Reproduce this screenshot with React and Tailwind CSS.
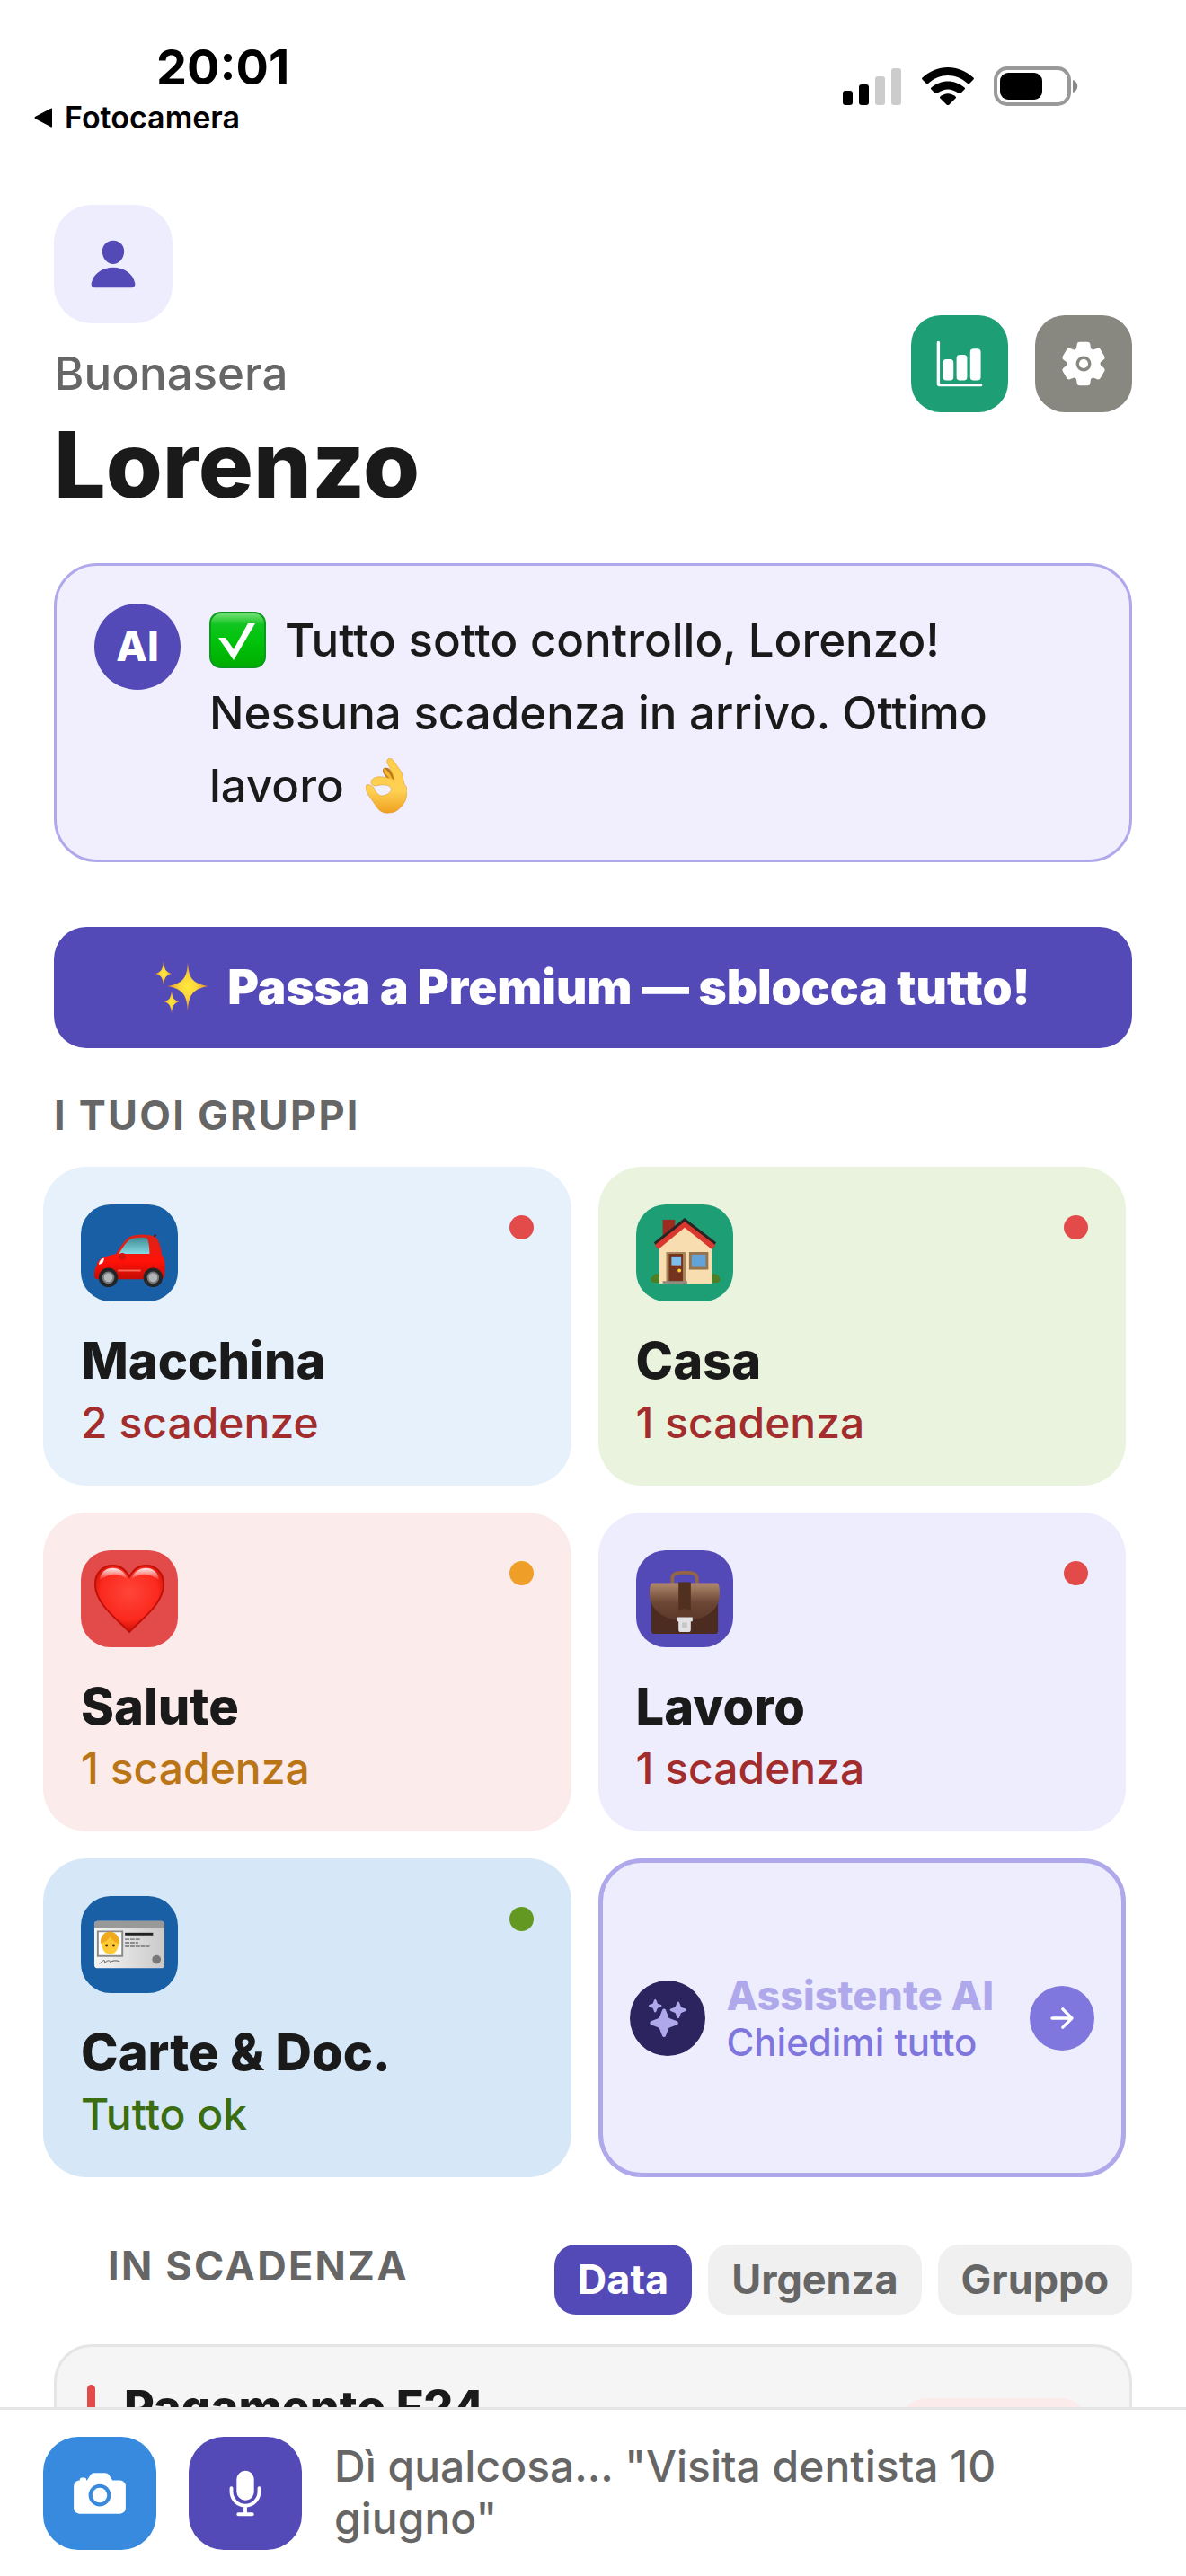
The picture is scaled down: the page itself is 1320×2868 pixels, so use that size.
import {
  IoPerson,
  IoBarChart,
  IoSettings,
  IoSparkles,
  IoArrowForward,
  IoCamera,
  IoMic,
} from "react-icons/io5";

const CheckEmoji = () => (
  <svg viewBox="0 0 64 64" className="inline-block w-16 h-16 align-[-14px] mr-5">
    <defs>
      <linearGradient id="check" x1="0" y1="0" x2="0" y2="1">
        <stop offset="0" stopColor="#7be27c" />
        <stop offset="0.22" stopColor="#10c41f" />
        <stop offset="0.5" stopColor="#00c40c" />
        <stop offset="1" stopColor="#00ac00" />
      </linearGradient>
    </defs>
    <rect x="1" y="1" width="61" height="61" rx="12" fill="url(#check)" stroke="#0a9a1c" strokeWidth="2" />
    <path d="M10 29h8l9 13 16-29h8L27 54z" fill="#fff" />
  </svg>
);

const OkHandEmoji = () => (
  <svg viewBox="0 0 46 62" className="inline-block w-[46px] h-[62px] align-[-13px] ml-6">
    <defs>
      <linearGradient id="hand" x1="0" y1="0" x2="0" y2="1">
        <stop offset="0" stopColor="#ffcf4a" />
        <stop offset="0.6" stopColor="#ffd052" />
        <stop offset="1" stopColor="#efa020" />
      </linearGradient>
    </defs>
    <path d="M21 11c3-1 5 0 7 3l7 12-8 1c-1-4-8-8-8-13 0-2 1-3 2-3z" fill="#b9791a" />
    <path
      d="M24 2c2-3 5-2 7 1l9 13c1 4 2 9 3 13 3 3 4 7 3 10-1 5-1 8-4 12-5 7-10 10-16 10-6 1-11-2-14-7L3 41c-3-5-4-9-2-11 3-1 5 0 8 3 2 4 4 8 8 9 6 0 10-3 12-7-1-3-4-5-7-5-5-1-9 1-12 1-4-1-5-4-3-7 5-5 12-3 18-2 3 0 5 2 7 2-1-3-3-8-5-13-2-4-4-6-3-9z"
      fill="url(#hand)"
      stroke="#d98d1c"
      strokeWidth="0.5"
    />
    <path d="M20 12c3 0 5 3 7 6l4 7-5-3c-3-3-6-6-6-10z" fill="#f6b52f" />
  </svg>
);

const SparklesEmoji = () => (
  <svg viewBox="0 0 60 60" className="w-15 h-15">
    <defs>
      <radialGradient id="star">
        <stop offset="0" stopColor="#ffe93b" />
        <stop offset="0.45" stopColor="#fbd43a" />
        <stop offset="1" stopColor="#e0822c" />
      </radialGradient>
    </defs>
    <g fill="url(#star)">
      <path d="M36 1c1 18 5 24 23 27-18 3-22 10-23 28-1-18-5-25-23-28C31 25 35 19 36 1z" />
      <path d="M9 0c1 9 2 12 9 14-7 2-8 5-9 13-1-8-2-11-9-13 7-2 8-5 9-14z" />
      <path d="M18 33c1 8 2 11 9 12-7 2-8 5-9 13-1-8-2-11-9-13 7-1 8-4 9-12z" />
    </g>
  </svg>
);

const CarEmoji = () => (
  <svg viewBox="0 -9 82 82" className="w-20 h-20">
    <defs>
      <linearGradient id="car" x1="0" y1="0" x2="0" y2="1">
        <stop offset="0" stopColor="#d8241b" />
        <stop offset="0.6" stopColor="#ff1208" />
        <stop offset="1" stopColor="#c40c05" />
      </linearGradient>
      <linearGradient id="glass" x1="0" y1="0" x2="0" y2="1">
        <stop offset="0" stopColor="#3e8a94" />
        <stop offset="1" stopColor="#86dbe4" />
      </linearGradient>
    </defs>
    <path d="M66 18l5-7" stroke="#5b1410" strokeWidth="2" />
    <path
      d="M1 58c0-6 1-9 3-12 0-6 6-10 22-13 6-10 12-20 20-21 9-2 20-1 25 2 4 3 6 12 7 20 4 5 4 14 3 24 0 3-2 4-6 4H5c-3 0-4-2-4-4z"
      fill="url(#car)"
    />
    <path d="M29 33c5-8 10-17 17-18 6-1 12-1 15 0 2 4 3 10 3 18z" fill="url(#glass)" />
    <circle cx="33" cy="36" r="4" fill="#d4150b" />
    <path d="M6 45c1-4 3-7 6-7 0 4-2 7-6 7z" fill="#fff" />
    <path d="M28 52h26" stroke="#ff6a5a" strokeWidth="2" />
    <g fill="#232526">
      <circle cx="17" cy="60" r="11" />
      <circle cx="68" cy="60" r="11" />
    </g>
    <g fill="#b3b6b8" stroke="#77797b" strokeWidth="2">
      <circle cx="17" cy="60" r="6" />
      <circle cx="68" cy="60" r="6" />
    </g>
  </svg>
);

const HouseEmoji = () => (
  <svg viewBox="0 0 82 82" className="w-20 h-20">
    <path d="M16 3h14v22H16z" fill="#9c2b22" />
    <path d="M12 30L42 7l30 23v46H12z" fill="#f7ddb0" />
    <path d="M41 1l36 28-4 6L41 9 10 35l-4-6z" fill="#2c2323" />
    <path d="M41 5l35 27-4 5L41 12 11 37l-4-5z" fill="#da382f" />
    <path d="M20 40h22v35H20z" fill="#a88458" />
    <path d="M23 42h16v32H23z" fill="#74331f" />
    <path d="M26 45h11v10H26z" fill="#7dbdec" />
    <circle cx="35" cy="61" r="2" fill="#ffd23c" />
    <path d="M46 40h22v20H46z" fill="#96744e" />
    <path d="M49 43h16v14H49z" fill="#62a4da" />
    <path d="M12 75c-10 1-12-4-7-8 4-4 7-2 7 0zM72 75c10 1 12-4 7-8-4-4-7-2-7 0z" fill="#4f7f22" />
    <path d="M16 73h28v4H16z" fill="#938a80" />
  </svg>
);

const HeartEmoji = () => (
  <svg viewBox="0 0 82 82" className="w-20 h-20">
    <defs>
      <radialGradient id="heart" cx="0.5" cy="0.4" r="0.6">
        <stop offset="0" stopColor="#ff4538" />
        <stop offset="0.7" stopColor="#fb291e" />
        <stop offset="1" stopColor="#cd0c04" />
      </radialGradient>
      <linearGradient id="shine" x1="0" y1="0" x2="0" y2="1">
        <stop offset="0" stopColor="#fff" stopOpacity="0.9" />
        <stop offset="1" stopColor="#fff" stopOpacity="0" />
      </linearGradient>
    </defs>
    <path
      d="M41 79C27 64 2 47 2 24 2 11 11 3 22 3c9 0 15 5 19 13C45 8 51 3 60 3c11 0 20 8 20 21 0 23-25 40-39 55z"
      fill="url(#heart)"
      stroke="#c01008"
      strokeWidth="2"
    />
    <path d="M7 20C8 10 15 6 22 6s14 4 16 12c-10-7-20-7-31 2zM75 20C74 10 67 6 60 6s-14 4-16 12c10-7 20-7 31 2z" fill="url(#shine)" />
  </svg>
);

const BriefcaseEmoji = () => (
  <svg viewBox="0 0 82 82" className="w-20 h-20">
    <defs>
      <linearGradient id="leather" x1="0" y1="0" x2="0" y2="1">
        <stop offset="0" stopColor="#b08a6c" />
        <stop offset="0.5" stopColor="#6e4836" />
        <stop offset="1" stopColor="#5a3729" />
      </linearGradient>
    </defs>
    <path d="M27 24v-6c0-5 3-7 14-7s14 2 14 7v6" fill="none" stroke="#936549" strokeWidth="4" />
    <path d="M3 36h76v42q0 3-3 3H6q-3 0-3-3z" fill="#4c2c20" />
    <path d="M4 23h74q3 0 3 13c0 17-16 30-40 30S1 53 1 36Q1 23 4 23z" fill="url(#leather)" />
    <path d="M34 22h14v32H34z" fill="#51301f" />
    <path d="M32 60c0-10 18-10 18 0z" fill="#633b2b" />
    <path d="M32 62h18v5h-2v9q0 3-3 3h-8q-3 0-3-3v-9h-2z" fill="#e2e2e4" />
    <path d="M38 68h6v6h-6z" fill="#c7c7ca" />
  </svg>
);

const IdCardEmoji = () => (
  <svg viewBox="0 0 82 82" className="w-20 h-20">
    <defs>
      <linearGradient id="card" x1="0" y1="0" x2="1" y2="0">
        <stop offset="0" stopColor="#f6f6f6" />
        <stop offset="1" stopColor="#c9c9c9" />
      </linearGradient>
    </defs>
    <rect x="1" y="14" width="80" height="54" rx="4" fill="url(#card)" />
    <path d="M1 22v-4q0-4 4-4h72q4 0 4 4v4z" fill="#999" />
    <path d="M5 26h28v28H5z" fill="#fff" stroke="#8a8a8a" strokeWidth="2" />
    <circle cx="19" cy="39" r="10" fill="#ffca35" />
    <path d="M8 40c-1-18 22-18 22 0-5-1-9-4-11-8-2 4-6 6-11 8z" fill="#f0a81c" />
    <path d="M10 42h18c0 13-18 13-18 0z" fill="#ffca35" />
    <circle cx="15" cy="42" r="1.5" fill="#4a2b10" />
    <circle cx="23" cy="42" r="1.5" fill="#4a2b10" />
    <path d="M36 29h32" stroke="#222" strokeWidth="3" />
    <path d="M36 35h18M36 39h15M36 43h28" stroke="#8c8c8c" strokeWidth="2" strokeDasharray="5 1" />
    <path d="M7 63c5-6 7-4 6-1 3-3 5-4 6-1 3-2 6-2 11-1" stroke="#555" strokeWidth="1" fill="none" />
    <circle cx="72" cy="58" r="5" fill="#777" />
  </svg>
);

const groups = [
  { name: "Macchina", status: "2 scadenze", Icon: CarEmoji, card: "bg-[#e6f1fb]", tile: "bg-[#185fa5]", dot: "bg-[#e24b4a]", text: "text-[#a32d2d]" },
  { name: "Casa", status: "1 scadenza", Icon: HouseEmoji, card: "bg-[#eaf3de]", tile: "bg-[#1d9e75]", dot: "bg-[#e24b4a]", text: "text-[#a32d2d]" },
  { name: "Salute", status: "1 scadenza", Icon: HeartEmoji, card: "bg-[#fcebeb]", tile: "bg-[#e24b4a]", dot: "bg-[#ef9f27]", text: "text-[#ba7517]" },
  { name: "Lavoro", status: "1 scadenza", Icon: BriefcaseEmoji, card: "bg-[#eeedfe]", tile: "bg-[#534ab7]", dot: "bg-[#e24b4a]", text: "text-[#a32d2d]" },
  { name: "Carte & Doc.", status: "Tutto ok", Icon: IdCardEmoji, card: "bg-[#d6e8f7]", tile: "bg-[#185fa5]", dot: "bg-[#639922]", text: "text-[#3b6d11]" },
];

const filters = ["Data", "Urgenza", "Gruppo"];

const StatusBar = () => (
  <div className="flex justify-between pt-[42px] pr-[120px] text-black">
    <div>
      <div className="pl-[174px] text-[54px] leading-[66px] font-bold">20:01</div>
      <button className="flex items-center gap-3 pl-[38px] text-[34px] leading-[46px] font-semibold">
        <svg viewBox="0 0 22 22" className="w-[22px] h-[22px]">
          <path d="M20 1v20q0 1-2 0L1 12q-1-1 0-2L18 1q2-1 2 0z" />
        </svg>
        Fotocamera
      </button>
    </div>
    <div className="flex items-center gap-[22px] h-[42px] mt-[33px]">
      <svg viewBox="0 0 66 42" className="w-[66px] h-[42px]">
        <rect x="0" y="26" width="11" height="16" rx="3" />
        <rect x="18" y="19" width="11" height="23" rx="3" />
        <rect x="36" y="10" width="11" height="32" rx="3" fill="#ccc" />
        <rect x="54" y="1" width="11" height="41" rx="3" fill="#ccc" />
      </svg>
      <svg viewBox="0 0 58 42" className="w-[58px] h-[42px]">
        <path d="M0 12C17-4 41-4 58 12q0 1-1 2l-4 4q-1 1-2 0C38 6 20 6 7 18q-1 1-2 0l-4-4q-1-1-1-2z" />
        <path d="M10 23c11-10 27-10 38 0v1l-5 5h-2c-8-6-16-6-24 0h-2l-5-5z" />
        <path d="M20 33c6-5 12-5 18 0v1l-8 8h-2l-8-8z" />
      </svg>
      <svg viewBox="0 0 94 44" className="w-[94px] h-11">
        <rect x="2" y="2" width="82" height="40" rx="13" fill="none" stroke="#999" strokeWidth="4" />
        <rect x="7" y="7" width="47" height="30" rx="9" />
        <path d="M88 15c7 2 7 12 0 14z" fill="#888" />
      </svg>
    </div>
  </div>
);

const GroupCard = ({ name, status, Icon, card, tile, dot, text }) => (
  <button className={`flex flex-col items-start p-[42px] pb-10 rounded-[48px] text-left ${card}`}>
    <span className="flex w-full justify-between">
      <span className={`flex items-center justify-center w-[108px] h-[108px] rounded-[33px] ${tile}`}>
        <Icon />
      </span>
      <span className={`w-[27px] h-[27px] mt-3 rounded-full ${dot}`} />
    </span>
    <span className="mt-8 text-[56px] leading-[69px] font-extrabold text-[#1a1a1a]">{name}</span>
    <span className={`mt-1 text-[48px] leading-[60px] font-medium ${text}`}>{status}</span>
  </button>
);

export default function App() {
  return (
    <div className="flex flex-col h-screen bg-white overflow-hidden font-['Inter',sans-serif] text-[#1a1a1a]">
      <main className="flex-1 min-h-0 overflow-hidden">
        <StatusBar />

        <header className="flex items-center justify-between px-[60px] mt-[74px]">
          <div>
            <button aria-label="Profilo" className="flex items-center justify-center w-[132px] h-[132px] rounded-[42px] bg-[#eeedfe]">
              <IoPerson className="w-[60px] h-[60px] text-[#534ab7]" />
            </button>
            <p className="mt-6 text-[51px] leading-[64px] font-medium text-[#666]">Buonasera</p>
            <h1 className="mt-1 text-[102px] leading-[130px] font-extrabold">Lorenzo</h1>
          </div>
          <div className="flex gap-[30px]">
            <button aria-label="Statistiche" className="flex items-center justify-center w-[108px] h-[108px] rounded-[33px] bg-[#1d9e75]">
              <IoBarChart className="w-[54px] h-[54px] text-white" />
            </button>
            <button aria-label="Impostazioni" className="flex items-center justify-center w-[108px] h-[108px] rounded-[33px] bg-[#888780]">
              <IoSettings className="w-[54px] h-[54px] text-white" />
            </button>
          </div>
        </header>

        <section className="flex items-start gap-8 mx-[60px] mt-[45px] p-[42px] rounded-[48px] border-3 border-[#afa9ec] bg-[#f1eefe]">
          <span className="flex shrink-0 items-center justify-center w-24 h-24 rounded-full bg-[#534ab7] text-white text-[45px] font-extrabold">
            AI
          </span>
          <p className="text-[51px] leading-[81px] font-medium">
            <CheckEmoji />
            Tutto sotto controllo, Lorenzo! Nessuna scadenza in arrivo. Ottimo lavoro
            <OkHandEmoji />
          </p>
        </section>

        <div className="px-[60px] mt-[72px]">
          <button className="flex items-center justify-center gap-5 w-full h-[135px] rounded-[36px] bg-[#534ab7] text-white text-[53px] font-black">
            <SparklesEmoji />
            Passa a Premium — sblocca tutto!
          </button>
        </div>

        <h2 className="px-[60px] mt-12 text-[45px] leading-[54px] font-bold tracking-wider text-[#666]">I TUOI GRUPPI</h2>
        <div className="grid grid-cols-2 gap-[30px] pl-12 pr-[67px] mt-[30px]">
          {groups.map((group) => (
            <GroupCard key={group.name} {...group} />
          ))}
          <button className="flex items-center px-[30px] rounded-[48px] border-5 border-[#afa9ec] bg-[#eeedfe] text-left">
            <span className="flex shrink-0 items-center justify-center w-21 h-21 rounded-full bg-[#2c245f]">
              <IoSparkles className="w-[42px] h-[42px] text-[#afa9ec]" />
            </span>
            <span className="flex-1 ml-6 whitespace-nowrap">
              <span className="block text-[45px] leading-[54px] font-extrabold text-[#afa9ec]">Assistente AI</span>
              <span className="block text-[42px] leading-[50px] font-medium text-[#7f77dd]">Chiedimi tutto</span>
            </span>
            <span className="flex shrink-0 items-center justify-center w-18 h-18 rounded-full bg-[#7f77dd]">
              <IoArrowForward className="w-9 h-9 text-white" />
            </span>
          </button>
        </div>

        <div className="flex items-start justify-between pl-[120px] pr-[60px] mt-[75px]">
          <h2 className="text-[45px] leading-[48px] font-bold tracking-wider text-[#666]">IN SCADENZA</h2>
          <div className="flex gap-[18px]">
            {filters.map((filter) => (
              <button
                key={filter}
                className={`h-[78px] px-[26px] rounded-3xl text-[45px] font-bold ${
                  filter === "Data" ? "bg-[#534ab7] text-white" : "bg-[#f0f0f0] text-[#666]"
                }`}
              >
                {filter}
              </button>
            ))}
          </div>
        </div>

        <article className="flex items-start mx-[60px] mt-[33px] px-[34px] pt-[42px] pb-10 rounded-[42px] border-3 border-[#e5e5e5] bg-[#f5f5f5]">
          <span className="w-[9px] h-32 rounded-full bg-[#e24b4a]" />
          <h3 className="flex-1 ml-8 text-[52px] leading-[52px] font-extrabold">Pagamento F24</h3>
          <span className="w-[210px] h-20 mt-[15px] mr-3 rounded-[30px] bg-[#fcebeb]" />
        </article>
      </main>

      <footer className="flex items-start gap-9 px-12 pt-[30px] pb-[29px] border-t-3 border-[#e5e5e5] bg-white">
        <button aria-label="Fotocamera" className="flex shrink-0 items-center justify-center w-[126px] h-[126px] rounded-[39px] bg-[#378add]">
          <IoCamera className="w-[66px] h-[66px] text-white" />
        </button>
        <button aria-label="Microfono" className="flex shrink-0 items-center justify-center w-[126px] h-[126px] rounded-[39px] bg-[#534ab7]">
          <IoMic className="w-[62px] h-[62px] text-white" />
        </button>
        <textarea
          aria-label="Nuova scadenza"
          rows={2}
          placeholder={'Dì qualcosa... "Visita dentista 10 giugno"'}
          className="flex-1 mt-1 mr-[120px] resize-none overflow-hidden text-[48px] leading-[58px] font-medium placeholder:text-[#666] outline-none"
        />
      </footer>
    </div>
  );
}
